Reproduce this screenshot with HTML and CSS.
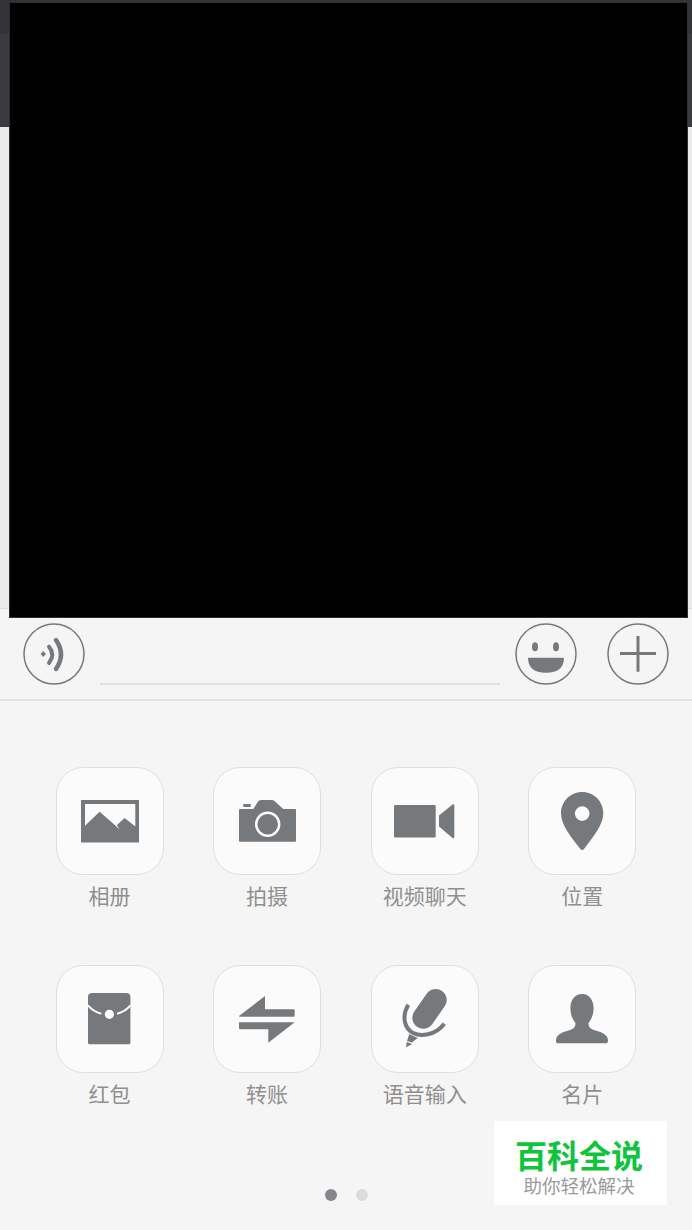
FILE: index.html
```html
<!DOCTYPE html>
<html lang="zh">
<head>
<meta charset="utf-8">
<title>微信</title>
<link rel="stylesheet" href="styles.css">
</head>
<body>
<div class="screen">
  <header class="topbar"><div class="statusbar"></div></header>
  <main class="messages"></main>
  <section class="inputbar">
    <button class="round">
      <svg viewBox="0 0 62 62" class="round-svg"><circle cx="31" cy="31" r="30" class="ring"/><path d="M20.200 28L23 31L20.200 34L17.600 31Z" class="fill"/><path d="M26 23.700Q32.500 31.500 26 40" class="wave1"/><path d="M33 17Q43 31.500 33 46" class="wave2"/></svg>
    </button>
    <div class="field"></div>
    <button class="round">
      <svg viewBox="0 0 62 62" class="round-svg"><circle cx="31" cy="31" r="30" class="ring"/><ellipse cx="20" cy="23.700" rx="3" ry="4.500" class="fill"/><ellipse cx="41" cy="23.700" rx="3" ry="4.500" class="fill"/><path d="M13 34.700H49Q49 49.700 31 49.700Q13 49.700 13 34.700Z" class="fill"/></svg>
    </button>
    <button class="round">
      <svg viewBox="0 0 62 62" class="round-svg"><circle cx="31" cy="31" r="30" class="ring"/><path d="M13 30.500H49M31 13V48.700" class="plus"/></svg>
    </button>
  </section>
  <section class="panel">
    <div class="grid">
      <div class="item"><div class="tile">
        <svg viewBox="0 0 58 43" class="ico ico-photo"><path fill-rule="evenodd" d="M0.500 0H57.500Q58 0 58 0.500V42Q58 42.500 57.500 42.500H0.500Q0 42.500 0 42V0.500Q0 0 0.500 0ZM4 4V25.700L18.600 11.700L35.500 26.500L38.300 29.700L36 25L43.600 18L54.300 26.500V4Z" class="fill"/></svg>
      </div><span class="label">相册</span></div>
      <div class="item"><div class="tile">
        <svg viewBox="0 0 57 42" class="ico ico-camera"><path fill-rule="evenodd" d="M1 9H14.300L19 1.500Q20 0 22 0H33Q35 0 36 1.500L44.300 9H56Q57 9 57 10V41Q57 41.700 56 41.700H1Q0 41.700 0 41V10Q0 9 1 9ZM28.700 11.600A12.700 12.700 0 1 0 28.700 37A12.700 12.700 0 1 0 28.700 11.600ZM28.700 14A10.300 10.300 0 1 1 28.700 34.600A10.300 10.300 0 1 1 28.700 14Z" class="fill"/><rect x="4.300" y="4" width="7.400" height="3" class="fill"/></svg>
      </div><span class="label">拍摄</span></div>
      <div class="item"><div class="tile">
        <svg viewBox="0 0 61 34.400" class="ico ico-video"><rect x="0" y="1" width="41.700" height="32.400" rx="1.200" class="fill"/><path d="M45 11.500L58.500 0.500Q60.300 -0.500 60.300 1.500V33Q60.300 35 58.500 34L45 22.500Z" class="fill"/></svg>
      </div><span class="label">视频聊天</span></div>
      <div class="item"><div class="tile">
        <svg viewBox="0 0 42.400 58.400" class="ico ico-pin"><path fill-rule="evenodd" d="M21.200 0C33 0 42.300 9.500 42.300 21.300C42.300 33 32 45 23 57Q21.200 59 19.400 57C10 45 0 33 0 21.300C0 9.500 9.400 0 21.200 0ZM21.200 14.300A7.300 7.300 0 1 0 21.200 28.900A7.300 7.300 0 1 0 21.200 14.300Z" class="fill"/></svg>
      </div><span class="label">位置</span></div>
      <div class="item"><div class="tile">
        <svg viewBox="0 0 42.400 51.300" class="ico ico-packet"><path d="M0 4Q0 0 4 0H38.400Q42.400 0 42.400 4V50Q42.400 51.300 41 51.300H1.400Q0 51.300 0 50Z" class="fill"/><path d="M0 12.300Q5 18.500 13.300 20.700M29.100 20.700Q37.400 18.500 42.400 12.300" class="flap-line"/><circle cx="21.400" cy="21.300" r="4.600" class="knock"/></svg>
      </div><span class="label">红包</span></div>
      <div class="item"><div class="tile">
        <svg viewBox="0 0 55.700 46.700" class="ico ico-swap"><path d="M0 20L26 0V13.300H54.500Q55.700 13.300 55.700 14.500V19.500Q55.700 20.700 54.500 20.700H0.500Z" class="fill"/><path d="M0 26.300H55.700L29.300 46.700V33.300H1Q0 33.300 0 32.300Z" class="fill"/></svg>
      </div><span class="label">转账</span></div>
      <div class="item"><div class="tile">
        <svg viewBox="0 0 45 60" class="ico ico-mic"><path d="M33.700 11L21.300 28.700" class="mic-body"/><path d="M6.300 15.700C-1 28 3 40 11.300 44C18 47.500 33 47 42.300 34.700" class="mic-arc"/><path d="M7.300 45L15.700 49L10 53.500L5 52Z" class="fill"/><path d="M4.700 53L10.300 55L4 58.300Z" class="fill"/></svg>
      </div><span class="label">语音输入</span></div>
      <div class="item"><div class="tile">
        <svg viewBox="0 0 52 49.300" class="ico ico-person"><path d="M26 0C33 0 37.600 6 37.600 14C37.600 21 35 26 32.500 29C32.500 33 34 34.500 38 36C44 38 52 39.500 52 46.500Q52 49.300 50 49.300H2Q0 49.300 0 46.500C0 39.500 8 38 14 36C18 34.500 19.500 33 19.500 29C17 26 14.400 21 14.400 14C14.400 6 19 0 26 0Z" class="fill"/></svg>
      </div><span class="label">名片</span></div>
    </div>
    <div class="dots"><span class="dot dot-on"></span><span class="dot"></span></div>
  </section>
  <div class="redaction"></div>
  <aside class="mark">
    <div class="mark-title">百科全说</div>
    <div class="mark-sub">助你轻松解决</div>
  </aside>
</div>
</body>
</html>
```
FILE: styles.css
```css
* { box-sizing: border-box; }
html, body { margin: 0; padding: 0; }
body { background: #f5f5f5; font-family: "Noto Sans CJK SC", "Noto Sans", sans-serif; }
.screen { position: relative; width: 692px; height: 1230px; display: flex; flex-direction: column; overflow: hidden; background: #f5f5f5; }
.topbar { height: 127px; background: #3a3b3e; flex: none; }
.statusbar { height: 34px; background: #333437; }
.messages { height: 482px; flex: none; background: #ebebeb; border-bottom: 1px solid #dedede; }
.inputbar { height: 92px; flex: none; display: flex; align-items: flex-start; padding: 14px 23px 0; border-bottom: 2px solid #e2e2e2; background: #f5f5f5; }
.round { width: 62px; height: 62px; padding: 0; border: 0; background: none; flex: none; display: block; }
.round-svg { display: block; width: 62px; height: 62px; }
.ring { fill: none; stroke: #76797b; stroke-width: 1.500; }
.fill { fill: #76797c; }
.wave1, .wave2 { fill: none; stroke: #76797c; stroke-linecap: round; }
.wave1 { stroke-width: 4; }
.wave2 { stroke-width: 4.500; }
.plus { fill: none; stroke: #76797c; stroke-width: 3; }
.field { width: 400px; height: 62px; margin: 0 15px; border-bottom: 2px solid #e0e0e0; flex: none; }
.inputbar .round:last-child { margin-left: 30px; }
.panel { flex: 1; position: relative; background: #f5f5f5; padding-top: 66px; }
.grid { display: grid; grid-template-columns: repeat(4, 108px); column-gap: 49.600px; row-gap: 56px; padding-left: 55.500px; }
.item { display: flex; flex-direction: column; align-items: center; width: 108px; }
.tile { width: 108px; height: 108px; border: 1.500px solid #dfdfdf; border-radius: 27px; background: #fbfbfb; display: flex; align-items: center; justify-content: center; }
.label { margin-top: 6px; font-size: 21px; line-height: 28px; color: #8f8f8f; white-space: nowrap; }
.ico { display: block; overflow: visible; }
.ico-photo { width: 58px; height: 43px; }
.ico-camera { width: 57px; height: 42px; }
.ico-video { width: 61px; height: 34.400px; }
.ico-pin { width: 42.400px; height: 58.400px; }
.ico-packet { width: 42.400px; height: 51.300px; }
.ico-swap { width: 55.700px; height: 46.700px; }
.ico-mic { width: 45px; height: 60px; }
.ico-person { width: 52px; height: 49.300px; }
.knock { fill: #fbfbfb; }
.flap-line { fill: none; stroke: #fbfbfb; stroke-width: 2; }
.mic-body { fill: none; stroke: #76797c; stroke-width: 22; stroke-linecap: round; }
.mic-arc { fill: none; stroke: #76797c; stroke-width: 4; }
.dots { position: absolute; left: 325px; top: 488px; display: flex; gap: 19px; }
.dot { width: 12px; height: 12px; border-radius: 50%; background: #dcdcdc; }
.dot-on { background: #85878a; }
.redaction { position: absolute; left: 9px; top: 2px; width: 679px; height: 616px; background: #000; border: 1px solid #2e2e2e; }
.mark { position: absolute; left: 494px; top: 1121px; width: 173px; height: 84px; background: #fff; display: flex; flex-direction: column; align-items: center; padding: 17px 3px 0 0; }
.mark-title { font-size: 32px; line-height: 32px; font-weight: 700; color: #10c43c; white-space: nowrap; }
.mark-sub { margin-top: 4px; font-size: 18.500px; line-height: 22px; color: #999; white-space: nowrap; }
```
